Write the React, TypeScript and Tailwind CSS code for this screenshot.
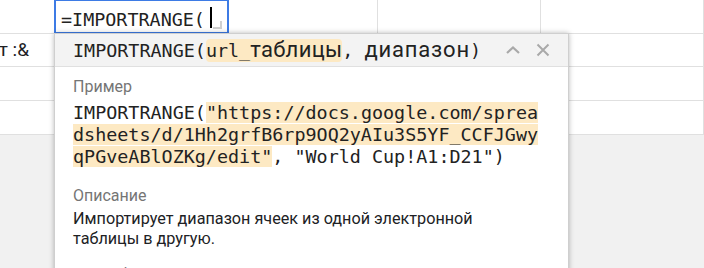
import React from "react";

const mono = { fontFamily: "'DejaVu Sans Mono', 'Liberation Mono', monospace" };

function Cell({ children, className = "" }: { children?: React.ReactNode; className?: string }) {
  return (
    <div className={`bg-white border-r border-b border-[#e0e0e0] overflow-hidden ${className}`}>{children}</div>
  );
}

export default function App() {
  return (
    <div className="relative w-[704px] h-[268px] overflow-hidden bg-[#f1f1f1] font-['Roboto',sans-serif] text-[#202124]">
      <div className="grid grid-cols-[55px_323px_163px_163px] grid-rows-[34px_33px_34px_34px]">
        <Cell />
        <Cell />
        <Cell />
        <Cell />
        <Cell className="flex items-center justify-end pr-[25px] whitespace-nowrap text-[19px]">
          <span>ент :&amp;</span>
        </Cell>
        <Cell />
        <Cell />
        <Cell />
        <Cell />
        <Cell />
        <Cell />
        <Cell />
        <Cell />
        <Cell />
        <Cell />
        <Cell />
      </div>

      {/* cell editor */}
      <div className="absolute left-[54px] top-[-1px] w-[175px] h-[35px] border-2 border-[#3d7be5] bg-white">
        <div className="pl-[5px] pt-[8px] text-[18.4px] leading-[22px] whitespace-nowrap text-[#222]" style={mono}>
          =IMPORTRANGE(
        </div>
        <span className="absolute left-[154px] top-[6px] w-[2px] h-[21px] bg-black" />
        <span className="absolute left-[157px] top-[20px] w-[9px] h-[8px] border-b-2 border-r-2 border-[#d0d0d0]" />
      </div>

      {/* formula help popup */}
      <div className="absolute left-[54px] top-[33px] w-[515px] h-[260px] bg-white border border-[#cfcfcf] shadow-[0_0_5px_rgba(0,0,0,0.28)]">
        <div className="h-[33px] bg-[#f3f3f3] border-b border-[#e0e0e0] flex items-center pl-[18px] pr-[16px]">
          <div className="flex-1 whitespace-nowrap text-[18.4px] leading-[22px] text-[#222]" style={mono}>
            IMPORTRANGE(
            <span className="bg-[#fde9c3] rounded-[4px] py-[1px]">
              url_<span className="font-['Roboto',sans-serif] text-[22px] tracking-[0.3px]">таблицы</span>
            </span>
            , <span className="font-['Roboto',sans-serif] text-[22px] tracking-[0.8px]">диапазон</span>)
          </div>
          <svg width="16" height="10" viewBox="0 0 16 10" className="mr-[15px]">
            <polyline points="2,8 8,2.5 14,8" fill="none" stroke="#a9a9a9" strokeWidth="2.2" />
          </svg>
          <svg width="14" height="14" viewBox="0 0 14 14" className="mr-[2px]">
            <path d="M1.5 1.5 L12.5 12.5 M12.5 1.5 L1.5 12.5" stroke="#a9a9a9" strokeWidth="2" />
          </svg>
        </div>

        <div className="pl-[18px] pt-[10px]">
          <div className="text-[16px] leading-[20px] text-[#757575]">Пример</div>
          <div className="mt-[5px] text-[18.4px] leading-[22px] whitespace-nowrap text-[#222]" style={mono}>
            <div>
              IMPORTRANGE(<span className="bg-[#fde9c3]">"https://docs.google.com/sprea</span>
            </div>
            <div>
              <span className="bg-[#fde9c3]">dsheets/d/1Hh2grfB6rp9OQ2yAIu3S5YF_CCFJGwy</span>
            </div>
            <div>
              <span className="bg-[#fde9c3]">qPGveABlOZKg/edit"</span>, "World Cup!A1:D21")
            </div>
          </div>
          <div className="mt-[18px] text-[16px] leading-[20px] text-[#757575]">Описание</div>
          <div className="mt-[3px] text-[16.2px] leading-[20px] text-[#202124]">
            Импортирует диапазон ячеек из одной электронной
            <br />
            таблицы в другую.
          </div>
          <div className="mt-[16px] text-[16px] leading-[20px] text-[#757575]">подробнее</div>
        </div>
      </div>
    </div>
  );
}
